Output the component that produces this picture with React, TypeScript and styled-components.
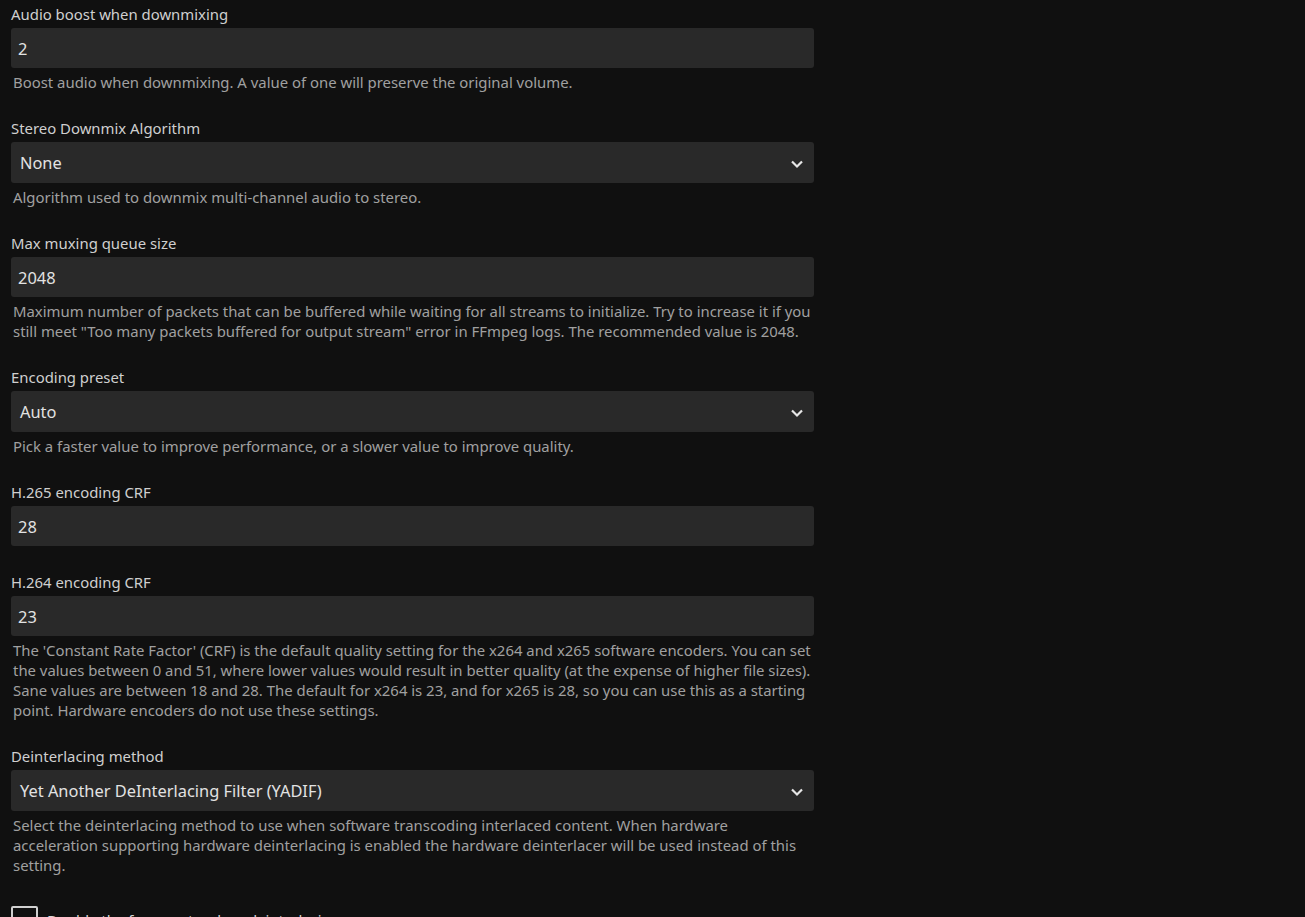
import styled, { createGlobalStyle } from "styled-components";

const GlobalStyle = createGlobalStyle`
  html, body {
    margin: 0;
    padding: 0;
    background: #101010;
    font-family: "Noto Sans", "Open Sans", sans-serif;
    color: #d6d6d6;
  }
`;

type Field = {
  label: string;
  value: string;
  select?: boolean;
  description?: string;
};

const fields: Field[] = [
  {
    label: "Audio boost when downmixing",
    value: "2",
    description: "Boost audio when downmixing. A value of one will preserve the original volume.",
  },
  {
    label: "Stereo Downmix Algorithm",
    value: "None",
    select: true,
    description: "Algorithm used to downmix multi-channel audio to stereo.",
  },
  {
    label: "Max muxing queue size",
    value: "2048",
    description:
      'Maximum number of packets that can be buffered while waiting for all streams to initialize. Try to increase it if you still meet "Too many packets buffered for output stream" error in FFmpeg logs. The recommended value is 2048.',
  },
  {
    label: "Encoding preset",
    value: "Auto",
    select: true,
    description: "Pick a faster value to improve performance, or a slower value to improve quality.",
  },
  { label: "H.265 encoding CRF", value: "28" },
  {
    label: "H.264 encoding CRF",
    value: "23",
    description:
      "The 'Constant Rate Factor' (CRF) is the default quality setting for the x264 and x265 software encoders. You can set the values between 0 and 51, where lower values would result in better quality (at the expense of higher file sizes). Sane values are between 18 and 28. The default for x264 is 23, and for x265 is 28, so you can use this as a starting point. Hardware encoders do not use these settings.",
  },
  {
    label: "Deinterlacing method",
    value: "Yet Another DeInterlacing Filter (YADIF)",
    select: true,
    description:
      "Select the deinterlacing method to use when software transcoding interlaced content. When hardware acceleration supporting hardware deinterlacing is enabled the hardware deinterlacer will be used instead of this setting.",
  },
];

const Chevron = () => (
  <svg width="14" height="10" viewBox="0 0 14 10">
    <polyline points="2,2.5 7,7.5 12,2.5" fill="none" stroke="#e6e6e6" strokeWidth="2.2" />
  </svg>
);

const App = () => {
  return (
    <>
      <GlobalStyle />
      <Page>
        {fields.map((f) => (
          <InputContainer key={f.label}>
            <Label>{f.label}</Label>
            <Box select={f.select}>
              <span>{f.value}</span>
              {f.select && <Chevron />}
            </Box>
            {f.description && <Description>{f.description}</Description>}
          </InputContainer>
        ))}
        <CheckboxRow>
          <CheckBox />
          <CheckLabel>Double the frame rate when deinterlacing</CheckLabel>
        </CheckboxRow>
      </Page>
    </>
  );
};

export default App;

const Page = styled.div`
  width: 803px;
  padding: 4px 0 0 11px;
`;

const InputContainer = styled.div`
  margin-bottom: 26px;
`;

const Label = styled.label`
  display: block;
  font-size: 14.9px;
  line-height: 20px;
  margin-bottom: 4px;
  color: #cfcfcf;
`;

const Box = styled.div<{ select?: boolean }>`
  display: flex;
  align-items: center;
  justify-content: space-between;
  box-sizing: border-box;
  height: ${(p) => (p.select ? "41px" : "40px")};
  padding: ${(p) => (p.select ? "0 10px 0 9px" : "0 7px")};
  background: #292929;
  border-radius: 3px;
  font-size: 16.4px;
  color: #e2e2e2;
  svg {
    margin-top: 2px;
  }
`;

const Description = styled.div`
  margin-top: 4px;
  padding-left: 2px;
  font-size: 14.9px;
  line-height: 20px;
  color: #a0a0a0;
`;

const CheckboxRow = styled.div`
  display: flex;
  align-items: center;
  padding-top: 5px;
`;

const CheckBox = styled.div`
  box-sizing: border-box;
  width: 27px;
  height: 27px;
  border: 2px solid #d0d0d0;
  border-radius: 2px;
  margin-right: 9px;
  flex-shrink: 0;
`;

const CheckLabel = styled.span`
  font-size: 14.9px;
  line-height: 20px;
  color: #d6d6d6;
`;
